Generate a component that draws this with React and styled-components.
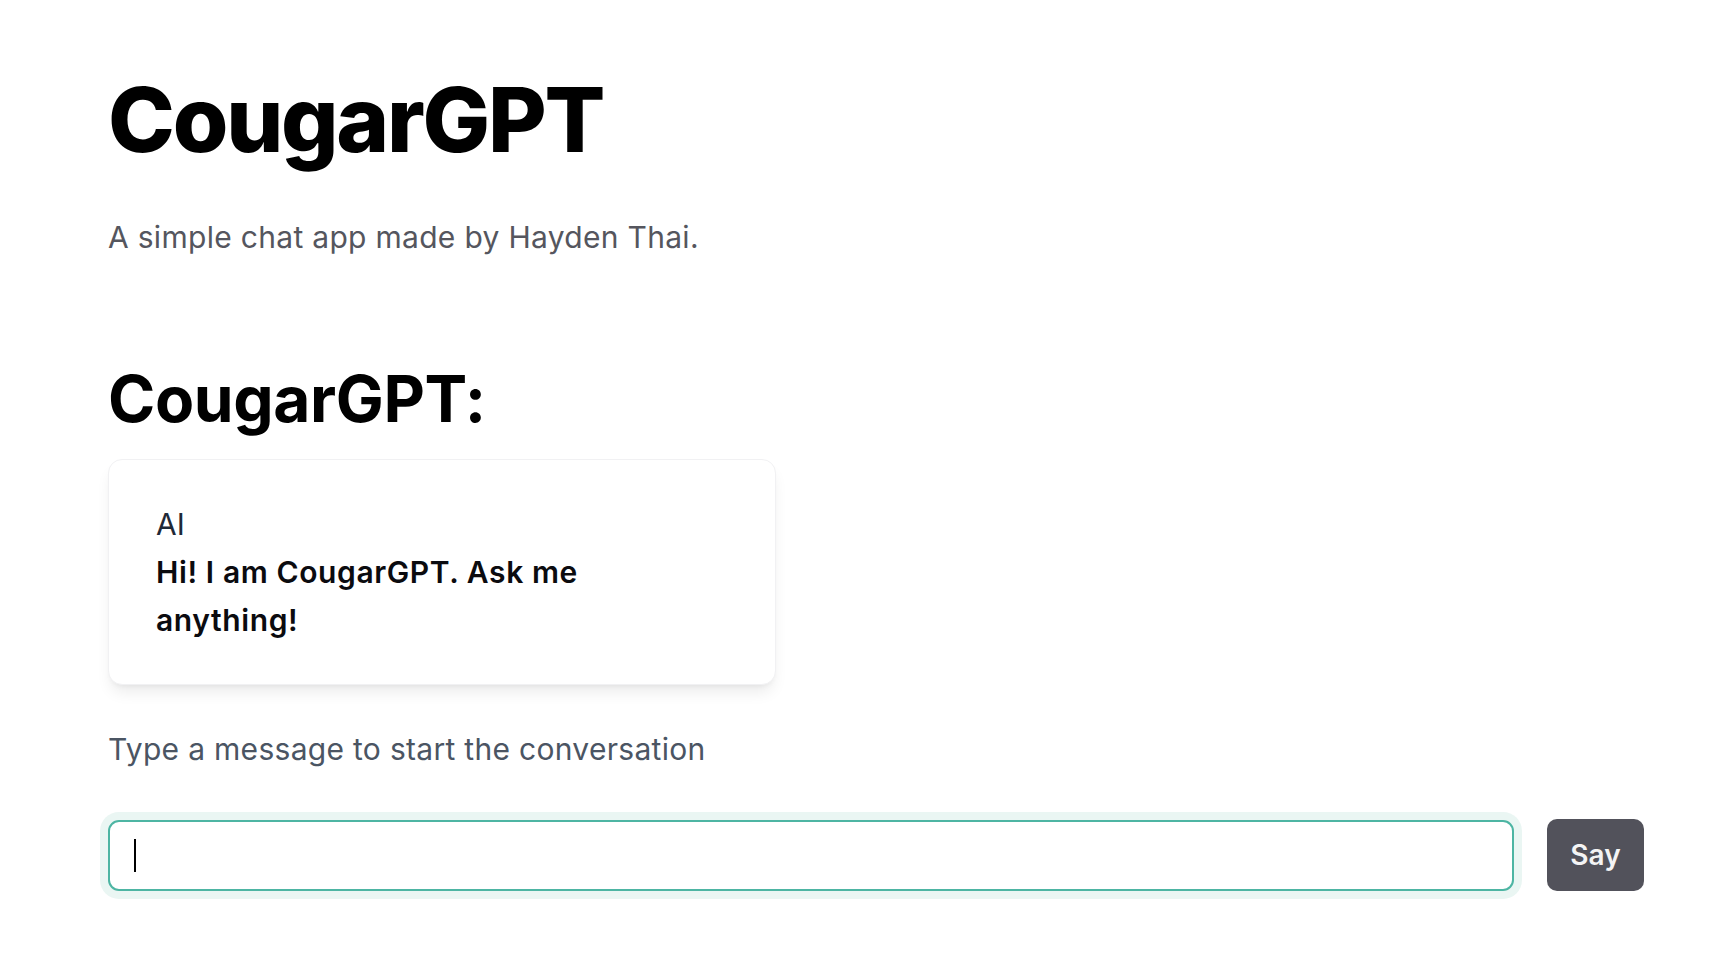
import React from "react";
import styled, { createGlobalStyle } from "styled-components";

const GlobalStyle = createGlobalStyle`
  html, body {
    margin: 0;
    padding: 0;
    background: #fff;
  }
  body {
    font-family: Inter, "Noto Sans", "Liberation Sans", sans-serif;
    -webkit-font-smoothing: antialiased;
  }
`;

const Page = styled.main`
  display: flex;
  flex-direction: column;
  align-items: flex-start;
  padding: 75px 66px 60px 108px;
`;

const Title = styled.h1`
  margin: 0;
  font-size: 90px;
  line-height: 1;
  font-weight: 800;
  letter-spacing: -0.025em;
  color: #000;
`;

const Subtitle = styled.p`
  margin: 50px 0 0;
  font-size: 30px;
  line-height: 45px;
  letter-spacing: 0.3px;
  color: #55565e;
`;

const ChatHeading = styled.h2`
  margin: 107px 0 0;
  font-size: 64px;
  line-height: 1;
  font-weight: 700;
  letter-spacing: -0.006em;
  color: #000;
`;

const Card = styled.div`
  margin-top: 28px;
  width: 668px;
  box-sizing: border-box;
  padding: 40px 47px;
  background: #fff;
  border: 1px solid #f1f1f3;
  border-radius: 14px;
  box-shadow: 0 10px 15px -3px rgba(0, 0, 0, 0.08), 0 4px 6px -4px rgba(0, 0, 0, 0.08);
`;

const Sender = styled.div`
  font-size: 30px;
  line-height: 48px;
  color: #1f2937;
`;

const Message = styled.div`
  max-width: 540px;
  font-size: 30px;
  line-height: 48px;
  font-weight: 600;
  letter-spacing: 0.6px;
  color: #0b0b0f;
`;

const Hint = styled.p`
  margin: 42px 0 0;
  font-size: 30px;
  line-height: 45px;
  letter-spacing: 0.3px;
  color: #4b5563;
`;

const Form = styled.form`
  margin-top: 47px;
  align-self: stretch;
  display: flex;
  align-items: center;
  gap: 33px;
`;

const Field = styled.div`
  position: relative;
  flex: 1;
  display: flex;
`;

const Input = styled.input`
  flex: 1;
  height: 71px;
  box-sizing: border-box;
  padding: 0 24px;
  font-family: inherit;
  font-size: 30px;
  color: #111;
  background: #fff;
  border: 2px solid #4db5a3;
  border-radius: 11px;
  outline: none;
  box-shadow: 0 0 0 8px #eaf6f3;
`;

const Caret = styled.span`
  position: absolute;
  left: 26px;
  top: 19px;
  width: 2px;
  height: 33px;
  background: #000;
`;

const SayButton = styled.button`
  width: 97px;
  height: 72px;
  border: none;
  border-radius: 10px;
  background: #52525b;
  color: #f4f4f5;
  font-family: inherit;
  font-size: 28px;
  font-weight: 600;
  cursor: pointer;
`;

export default function App() {
  return (
    <>
      <GlobalStyle />
      <Page>
        <Title>CougarGPT</Title>
        <Subtitle>A simple chat app made by Hayden Thai.</Subtitle>
        <ChatHeading>CougarGPT:</ChatHeading>
        <Card>
          <Sender>AI</Sender>
          <Message>Hi! I am CougarGPT. Ask me anything!</Message>
        </Card>
        <Hint>Type a message to start the conversation</Hint>
        <Form onSubmit={(e) => e.preventDefault()}>
          <Field>
            <Input type="text" />
            <Caret />
          </Field>
          <SayButton type="submit">Say</SayButton>
        </Form>
      </Page>
    </>
  );
}
